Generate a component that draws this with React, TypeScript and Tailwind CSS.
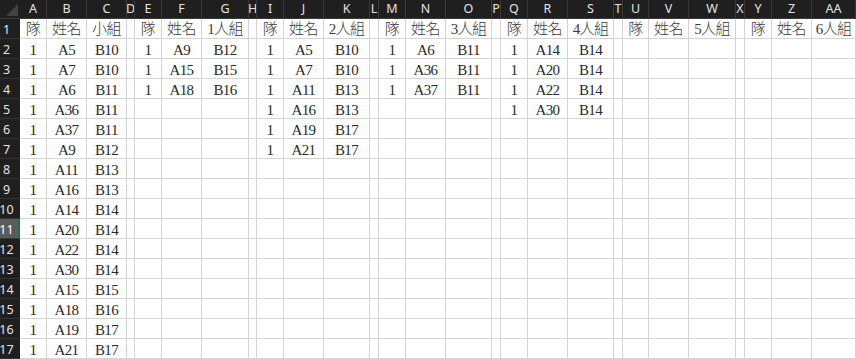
const columns = [
  "A", "B", "C", "D", "E", "F", "G", "H", "I", "J", "K", "L", "M", "N",
  "O", "P", "Q", "R", "S", "T", "U", "V", "W", "X", "Y", "Z", "AA",
];

// each group: [first column index, header label, rows of [name, group]]
const groups: [number, string, [string, string][]][] = [
  [
    0,
    "小組",
    [
      ["A5", "B10"], ["A7", "B10"], ["A6", "B11"], ["A36", "B11"],
      ["A37", "B11"], ["A9", "B12"], ["A11", "B13"], ["A16", "B13"],
      ["A14", "B14"], ["A20", "B14"], ["A22", "B14"], ["A30", "B14"],
      ["A15", "B15"], ["A18", "B16"], ["A19", "B17"], ["A21", "B17"],
    ],
  ],
  [4, "1人組", [["A9", "B12"], ["A15", "B15"], ["A18", "B16"]]],
  [
    8,
    "2人組",
    [
      ["A5", "B10"], ["A7", "B10"], ["A11", "B13"],
      ["A16", "B13"], ["A19", "B17"], ["A21", "B17"],
    ],
  ],
  [12, "3人組", [["A6", "B11"], ["A36", "B11"], ["A37", "B11"]]],
  [16, "4人組", [["A14", "B14"], ["A20", "B14"], ["A22", "B14"], ["A30", "B14"]]],
  [20, "5人組", []],
  [24, "6人組", []],
];

const ROWS = 17;

function buildSheet() {
  const sheet: string[][] = Array.from({ length: ROWS }, () =>
    Array(columns.length).fill("")
  );
  groups.forEach(([start, label, rows]) => {
    sheet[0][start] = "隊";
    sheet[0][start + 1] = "姓名";
    sheet[0][start + 2] = label;
    rows.forEach(([name, group], i) => {
      sheet[i + 1][start] = "1";
      sheet[i + 1][start + 1] = name;
      sheet[i + 1][start + 2] = group;
    });
  });
  return sheet;
}

const ColumnHeader: React.FC<{ label: string }> = ({ label }) => (
  <div className="flex h-[19px] justify-center overflow-hidden border-r border-b border-[#3a3a3a] bg-[#1f1f1f] pt-[1px] text-[12.5px] leading-[15px] text-[#e3e3e3]">
    {label}
  </div>
);

const RowHeader: React.FC<{ n: number; active: boolean }> = ({ n, active }) => (
  <div
    className={
      active
        ? "flex h-[20px] items-center justify-center overflow-hidden border-r-2 border-b border-r-[#1e7145] border-b-[#3a3a3a] bg-[#5b5b5b] pr-[5px] pt-[3px] text-[12.5px] text-white"
        : "flex h-[20px] items-center justify-center overflow-hidden border-b border-[#333333] bg-[#1f1f1f] pr-[7px] pt-[3px] text-[12.5px] text-[#e3e3e3]"
    }
  >
    {n}
  </div>
);

export default function App() {
  const sheet = buildSheet();

  return (
    <div className="h-[359px] w-[856px] overflow-hidden bg-white font-['Segoe_UI','Noto_Sans',sans-serif]">
      <div className="grid grid-cols-[20px_27px_40px_40px_8px_27px_40px_47px_8px_27px_40px_46px_9px_27px_40px_46px_9px_27px_40px_46px_9px_26px_40px_47px_9px_27px_40px_44px]">
        {/* corner */}
        <div className="relative h-[19px] border-b border-[#3a3a3a] bg-[#1f1f1f]">
          <svg className="absolute right-[2px] bottom-[2px]" width="12" height="12" viewBox="0 0 12 12">
            <polygon points="12,0 12,12 0,12" fill="#444444" />
          </svg>
        </div>
        {columns.map((c) => (
          <ColumnHeader key={c} label={c} />
        ))}

        {sheet.map((row, r) => (
          <Row key={r} index={r} cells={row} />
        ))}
      </div>
    </div>
  );
}

const Row: React.FC<{ index: number; cells: string[] }> = ({ index, cells }) => (
  <>
    <RowHeader n={index + 1} active={index === 10} />
    {cells.map((text, c) => (
      <div
        key={c}
        className={
          index === 0
            ? "flex h-[20px] justify-center overflow-hidden whitespace-nowrap border-r border-b border-[#d4d4d4] pt-[2px] font-['Liberation_Serif','Noto_Sans_CJK_TC',serif] text-[15px] font-light leading-[16px] tracking-[-0.6px] text-[#3a3a3a]"
            : "flex h-[20px] justify-center overflow-hidden whitespace-nowrap border-r border-b border-[#d4d4d4] pt-[3px] font-['Liberation_Serif','Noto_Sans_CJK_TC',serif] text-[15px] leading-[16px] tracking-[-0.6px] text-[#2a2a2a]"
        }
      >
        {text}
      </div>
    ))}
  </>
);
